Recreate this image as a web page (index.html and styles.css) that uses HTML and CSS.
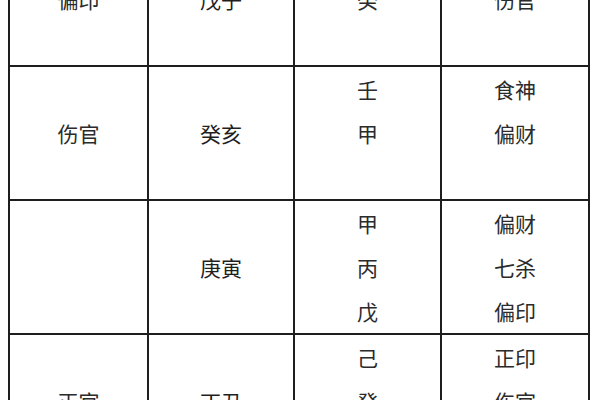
FILE: index.html
```html
<!DOCTYPE html>
<html lang="zh">
<head>
<meta charset="utf-8">
<link rel="stylesheet" href="styles.css">
</head>
<body>
<table class="chart">
  <colgroup>
    <col class="c1"><col class="c2"><col class="c3"><col class="c4">
  </colgroup>
  <tr>
    <td>偏印</td>
    <td class="pillar">戊子</td>
    <td>癸</td>
    <td>伤官</td>
  </tr>
  <tr>
    <td>伤官</td>
    <td class="pillar">癸亥</td>
    <td class="list">壬<br>甲<br>&nbsp;</td>
    <td class="list">食神<br>偏财<br>&nbsp;</td>
  </tr>
  <tr>
    <td></td>
    <td class="pillar">庚寅</td>
    <td class="list">甲<br>丙<br>戊</td>
    <td class="list">偏财<br>七杀<br>偏印</td>
  </tr>
  <tr>
    <td>正官</td>
    <td class="pillar">丁丑</td>
    <td class="list">己<br>癸<br>辛</td>
    <td class="list">正印<br>伤官<br>劫财</td>
  </tr>
</table>
</body>
</html>
```

FILE: styles.css
```css
html, body {
  margin: 0;
  padding: 0;
  background: #ffffff;
  overflow: hidden;
}
body {
  padding-left: 8px;
  font-family: "Noto Sans CJK SC", "Noto Sans", sans-serif;
}
.chart {
  margin-top: -69px;
  border-collapse: collapse;
  width: 582px;
  table-layout: fixed;
  color: #2b2b2b;
  font-size: 21px;
}
.c1 { width: 139px; }
.c2 { width: 146px; }
.c3 { width: 147px; }
.c4 { width: 148px; }
.chart td {
  border: 2px solid #1e1e1e;
  text-align: center;
  vertical-align: middle;
  padding: 0;
  height: 132px;
  line-height: 44px;
}
.chart td.pillar {
  color: #1f1f1f;
}
```
